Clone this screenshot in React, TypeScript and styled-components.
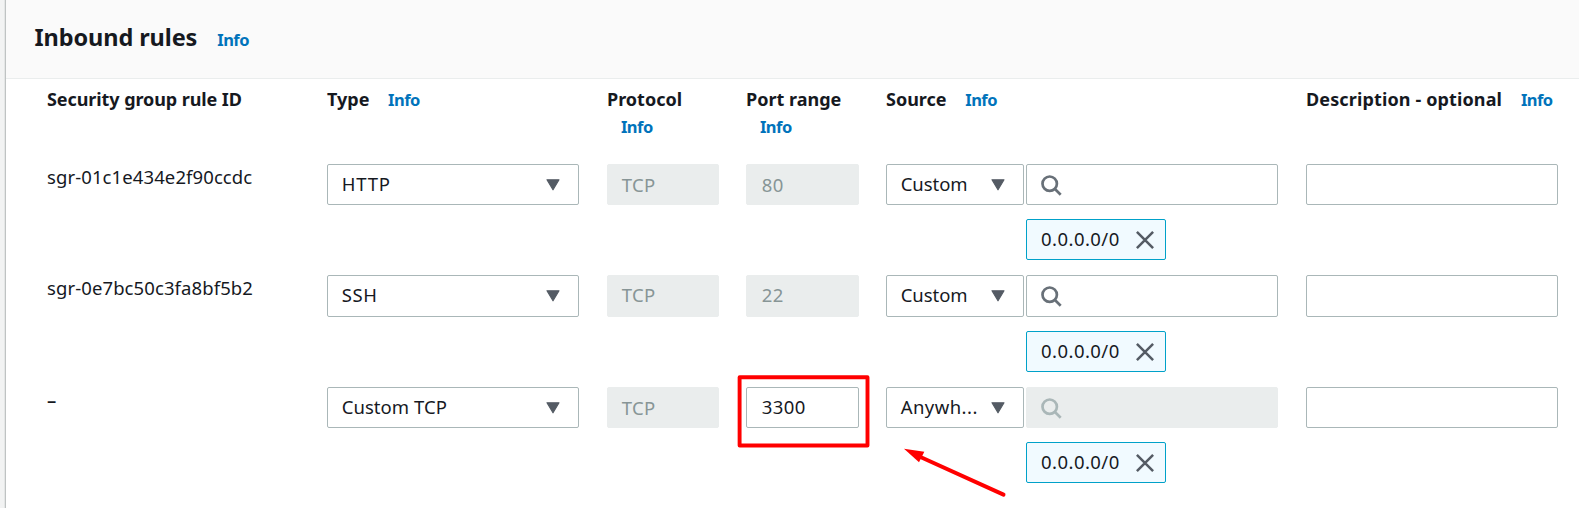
import React from 'react';
import styled, { createGlobalStyle } from 'styled-components';

const GlobalStyle = createGlobalStyle`
  *, *::before, *::after { box-sizing: border-box; }
  body {
    margin: 0;
    overflow: hidden;
    background: #fff;
    color: #16191f;
    font-family: 'Noto Sans', sans-serif;
    font-size: 18.5px;
  }
`;

const Page = styled.div`
  position: relative;
  display: flex;
  width: 1579px;
  height: 508px;
  overflow: hidden;
`;

const Gutter = styled.div`
  flex: none;
  width: 6px;
  background: linear-gradient(to right, #f2f3f3 4px, #e4e6e6 4px, #e4e6e6 5px, #bfc3c3 5px);
`;

const Panel = styled.section`
  flex: 1;
  min-width: 0;
  background: #fff;
`;

const PanelHeader = styled.header`
  display: flex;
  align-items: baseline;
  height: 79px;
  padding: 21px 0 0 28.5px;
  background: #fafafa;
  border-bottom: 1px solid #eaeded;
`;

const Title = styled.h2`
  margin: 0;
  font-size: 23.5px;
  font-weight: 700;
  line-height: 32px;
  letter-spacing: -0.1px;
  white-space: nowrap;
`;

const InfoLink = styled.a`
  display: inline-block;
  margin-left: 14px;
  color: #0073bb;
  font-size: 16.5px;
  font-weight: 700;
  line-height: 20px;
  letter-spacing: -0.55px;
`;

const TitleInfo = styled(InfoLink)`
  margin-left: 20px;
`;

const Row = styled.div<{ $height?: number }>`
  display: grid;
  grid-template-columns: 280px 280px 139px 140px 420px 252px;
  align-items: start;
  height: ${(p) => p.$height ?? 111}px;
  padding-left: 41px;
`;

const HeaderRow = styled(Row)`
  padding-top: 7px;
`;

const Label = styled.div<{ $width?: number; $spacing?: number }>`
  width: ${(p) => (p.$width ? `${p.$width}px` : 'auto')};
  font-size: 18px;
  font-weight: 700;
  line-height: 27px;
  letter-spacing: ${(p) => p.$spacing ?? 0}px;
`;

const RuleId = styled.div<{ $empty?: boolean }>`
  padding-top: 2px;
  font-weight: ${(p) => (p.$empty ? 600 : 400)};
  line-height: 22px;
  letter-spacing: 0.1px;
`;

const Field = styled.div<{ $width: number; $height: number; $disabled?: boolean }>`
  display: flex;
  align-items: center;
  width: ${(p) => p.$width}px;
  height: ${(p) => p.$height}px;
  padding: 0 18px 0 13.7px;
  border: 1px solid ${(p) => (p.$disabled ? '#eaeded' : '#aab7b8')};
  border-radius: 2px;
  background: ${(p) => (p.$disabled ? '#eaeded' : '#fff')};
  color: ${(p) => (p.$disabled ? '#879596' : '#16191f')};
  line-height: 24px;
  white-space: nowrap;
`;

const SelectBox = styled(Field)`
  justify-content: space-between;
`;

const PortField = styled(Field)`
  padding-left: 14.7px;
`;

const SearchField = styled(Field)`
  padding-top: 1px;
`;

const Value = styled.span<{ $spacing?: number; $lift?: number }>`
  padding-bottom: ${(p) => p.$lift ?? 2}px;
  letter-spacing: ${(p) => p.$spacing ?? 0.4}px;
`;

const Source = styled.div`
  display: grid;
  grid-template-columns: 138px 252px;
  column-gap: 2px;
  row-gap: 14px;
`;

const Token = styled.div`
  grid-column: 2;
  display: flex;
  align-items: center;
  justify-content: space-between;
  width: 140px;
  height: 41px;
  padding: 0 11px 0 14px;
  border: 1px solid #00a1c9;
  border-radius: 2px;
  background: #f1faff;
  line-height: 24px;
`;

const Annotation = styled.svg`
  position: absolute;
  left: 730px;
  top: 368px;
  pointer-events: none;
`;

const Caret = () => (
  <svg width="14" height="12" viewBox="0 0 14 12">
    <path d="M1 .8h12L7 10.8z" fill="#545b64" stroke="#545b64" strokeWidth="1.2" strokeLinejoin="round" />
  </svg>
);

const SearchIcon = ({ color }: { color: string }) => (
  <svg width="21" height="21" viewBox="0 0 21 21" fill="none" stroke={color} strokeWidth="2.7">
    <circle cx="8.7" cy="8.7" r="7.2" />
    <path d="M13.7 13.7l6 6" />
  </svg>
);

const CloseIcon = () => (
  <svg width="18" height="18" viewBox="0 0 18 18" fill="none" stroke="#545b64" strokeWidth="2.5">
    <path d="M.9.9l16.2 16.2M17.1.9L.9 17.1" />
  </svg>
);

interface SelectProps {
  width: number;
  height: number;
  value: string;
  spacing?: number;
}

const Select = ({ width, height, value, spacing }: SelectProps) => (
  <SelectBox $width={width} $height={height}>
    <Value $spacing={spacing}>{value}</Value>
    <Caret />
  </SelectBox>
);

interface Rule {
  id: string;
  type: string;
  typeSpacing: number;
  port: string;
  portEditable?: boolean;
  source: string;
  sourceSpacing: number;
  rowHeight: number;
  fieldHeight: number;
}

const rules: Rule[] = [
  { id: 'sgr-01c1e434e2f90ccdc', type: 'HTTP', typeSpacing: 0.8, port: '80', source: 'Custom', sourceSpacing: -0.05, rowHeight: 111, fieldHeight: 41 },
  { id: 'sgr-0e7bc50c3fa8bf5b2', type: 'SSH', typeSpacing: 0.6, port: '22', source: 'Custom', sourceSpacing: -0.05, rowHeight: 112, fieldHeight: 42 },
  { id: '–', type: 'Custom TCP', typeSpacing: 0.05, port: '3300', portEditable: true, source: 'Anywh...', sourceSpacing: 0.45, rowHeight: 112, fieldHeight: 41 },
];

const RuleRow = ({ rule }: { rule: Rule }) => {
  const h = rule.fieldHeight;
  const locked = rule.portEditable;
  const disabledLift = h === 41 ? 0 : 1.5;
  return (
    <Row $height={rule.rowHeight}>
      <RuleId $empty={rule.id === '–'}>{rule.id}</RuleId>
      <Select width={252} height={h} value={rule.type} spacing={rule.typeSpacing} />
      <Field $width={112} $height={h} $disabled>
        <Value $lift={disabledLift}>TCP</Value>
      </Field>
      <PortField $width={113} $height={h} $disabled={!rule.portEditable}>
        <Value $lift={rule.portEditable ? 2 : disabledLift}>{rule.port}</Value>
      </PortField>
      <Source>
        <Select width={138} height={h} value={rule.source} spacing={rule.sourceSpacing} />
        <SearchField $width={252} $height={h} $disabled={locked}>
          <SearchIcon color={locked ? '#aab7b8' : '#687078'} />
        </SearchField>
        <Token>
          <Value $spacing={0.45}>0.0.0.0/0</Value>
          <CloseIcon />
        </Token>
      </Source>
      <Field $width={252} $height={h} />
    </Row>
  );
};

export default function App() {
  return (
    <Page>
      <GlobalStyle />
      <Gutter />
      <Panel>
        <PanelHeader>
          <Title>Inbound rules</Title>
          <TitleInfo>Info</TitleInfo>
        </PanelHeader>
        <HeaderRow $height={85}>
          <Label $spacing={-0.08}>Security group rule ID</Label>
          <Label>Type <InfoLink>Info</InfoLink></Label>
          <Label $width={112}>Protocol <InfoLink>Info</InfoLink></Label>
          <Label $width={113}>Port range <InfoLink>Info</InfoLink></Label>
          <Label>Source <InfoLink>Info</InfoLink></Label>
          <Label $spacing={0.13}>Description - optional <InfoLink>Info</InfoLink></Label>
        </HeaderRow>
        {rules.map((rule) => (
          <RuleRow key={rule.id} rule={rule} />
        ))}
      </Panel>
      <Annotation width="290" height="140" viewBox="730 368 290 140">
        <rect x="739.6" y="377.3" width="127.9" height="68.2" fill="none" stroke="#f00" strokeWidth="3.9" strokeLinejoin="round" />
        <path d="M921 457.3L1003.5 494.6" stroke="#f00" strokeWidth="4" strokeLinecap="round" />
        <path d="M904 448.7L924.3 451.7L919 462.2z" fill="#f00" />
      </Annotation>
    </Page>
  );
}
